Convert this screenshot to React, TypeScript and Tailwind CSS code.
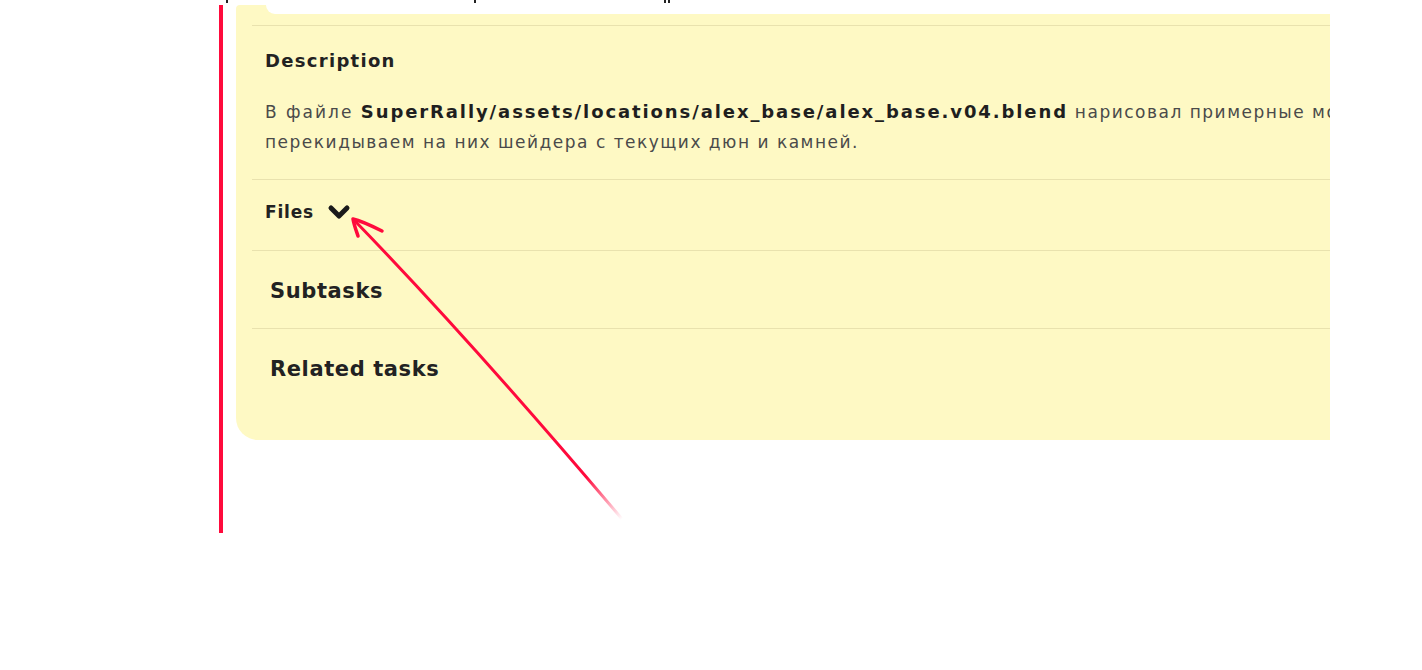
import React from "react";

const font = { fontFamily: '"DejaVu Sans", Verdana, sans-serif' };

function Chevron() {
  return (
    <svg width="26" height="18" viewBox="0 0 26 18" className="ml-[13px] shrink-0">
      <polyline
        points="4,5 12,13 20,5"
        fill="none"
        stroke="#1a1a1a"
        strokeWidth="5"
        strokeLinecap="round"
        strokeLinejoin="round"
      />
    </svg>
  );
}

function Divider() {
  return <div className="h-px bg-[#e9e2ae]" />;
}

export default function App() {
  return (
    <div
      className="relative w-[1422px] h-[670px] bg-white overflow-hidden"
      style={font}
    >
      {/* clipped descenders from the line above */}
      <div className="absolute left-[226px] top-0 w-[2px] h-[3px] bg-[#222]" />
      <div className="absolute left-[474px] top-0 w-[2px] h-[3px] bg-[#222]" />
      <div className="absolute left-[664px] top-0 w-[2px] h-[3px] bg-[#222]" />
      <div className="absolute left-[668px] top-0 w-[2px] h-[3px] bg-[#222]" />

      {/* red annotation line */}
      <div className="absolute left-[219px] top-[5px] w-[4px] h-[528px] bg-[#ff0a3c]" />

      <div className="pt-[5px] pl-[236px]">
        <div className="relative w-[1094px] h-[435px] bg-[#fef9c4] rounded-tl-[4px] rounded-bl-[22px] overflow-hidden">
          {/* white notch at top */}
          <div className="absolute left-[30px] top-0 right-0 h-[9px] bg-white rounded-bl-[10px]" />

          <div className="pl-[16px] pt-[20px]">
            <Divider />
            <div className="pl-[13px] pt-[23px] pb-[22px]">
              <div className="text-[18px] leading-[24px] font-bold text-[#222] tracking-[1.3px]">
                Description
              </div>
              <div className="mt-[24px] text-[17px] leading-[30px] text-[#4a4a4a] tracking-[1.5px] whitespace-nowrap">
                <div>
                  <span className="tracking-[2px]">В файле </span>
                  <span className="font-bold text-[18px] text-[#1f1f1f] tracking-[1.9px]">
                    SuperRally/assets/locations/alex_base/alex_base.v04.blend
                  </span>{" "}
                  нарисовал примерные модели
                </div>
                <div>перекидываем на них шейдера с текущих дюн и камней.</div>
              </div>
            </div>
            <Divider />
            <div className="pl-[13px] pt-[19px] pb-[26px] flex items-center h-[70px]">
              <span className="text-[17px] leading-[24px] font-bold text-[#222] tracking-[0.8px]">
                Files
              </span>
              <Chevron />
            </div>
            <Divider />
            <div className="pl-[18px] pt-[2px] h-[77px] flex items-center">
              <span className="text-[21px] leading-[28px] font-bold text-[#222] tracking-[0.6px]">
                Subtasks
              </span>
            </div>
            <Divider />
            <div className="pl-[18px] pt-[2px] h-[78px] flex items-center">
              <span className="text-[21px] leading-[28px] font-bold text-[#222] tracking-[0.6px]">
                Related tasks
              </span>
            </div>
          </div>
        </div>
      </div>

      {/* hand-drawn arrow */}
      <svg
        className="absolute inset-0 pointer-events-none"
        width="1422"
        height="670"
        viewBox="0 0 1422 670"
      >
        <defs>
          <linearGradient
            id="fade"
            gradientUnits="userSpaceOnUse"
            x1="622"
            y1="519"
            x2="585"
            y2="478"
          >
            <stop offset="0" stopColor="#ff0a3c" stopOpacity="0" />
            <stop offset="1" stopColor="#ff0a3c" stopOpacity="1" />
          </linearGradient>
        </defs>
        <path
          d="M 622 519 Q 475 345 355 221"
          fill="none"
          stroke="url(#fade)"
          strokeWidth="3"
          strokeLinecap="round"
        />
        <path
          d="M 382 231 C 372 226, 362 221, 353 219 C 354 225, 356 230, 358 236"
          fill="none"
          stroke="#ff0a3c"
          strokeWidth="3.5"
          strokeLinecap="round"
          strokeLinejoin="round"
        />
      </svg>
    </div>
  );
}
